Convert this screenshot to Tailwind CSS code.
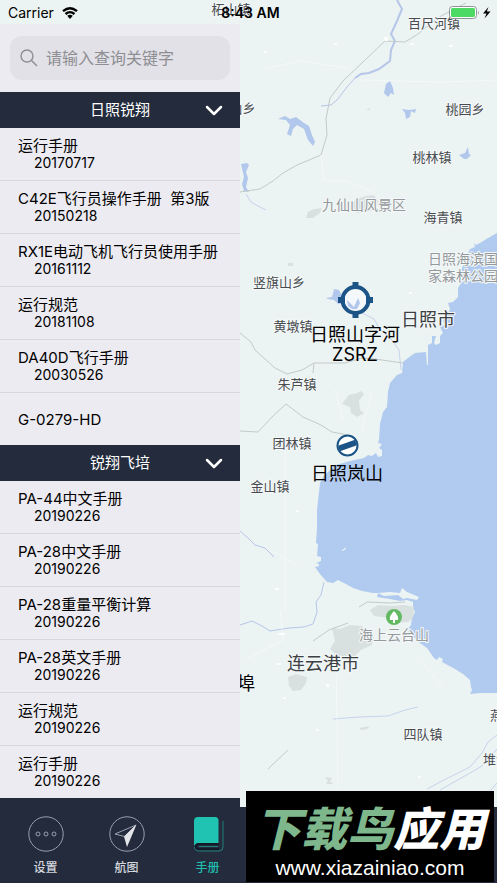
<!DOCTYPE html>
<html lang="zh-CN">
<head>
    <meta charset="UTF-8">
    <meta name="viewport" content="width=device-width, initial-scale=1.0">
    <title>飞行手册</title>
    <script src="https://cdn.jsdelivr.net/npm/@tailwindcss/browser@4"></script>
</head>
<body class="bg-[#ecf3f3] font-['Inter','Noto_Sans_CJK_SC',sans-serif] text-black">
    <div class="relative flex min-h-screen flex-col overflow-hidden">

        <!-- Map -->
        <svg class="absolute inset-0 h-full w-full" viewBox="0 0 497 883" preserveAspectRatio="xMinYMin slice" aria-label="地图">
            <!-- sea -->
            <path fill="#b1cbf0" d="M497 233L488 238L480 243L476 245L474 243L475 247L470 249L466 259L462 268L461 283L458 288L458 297L453 302L448 303L450 309L447 317L443 320L445 325L440 327L443 333L440 336L440 343L436 345L434 343L436 336L432 336L432 343L428 345L428 365L427 365L426 352L415 353L408 358L403 362L402 373L397 375L390 383L388 392L387 407L383 412L380 424L379 440L378 443L382 444L379 448L382 450V456L378 457L376 453L372 456L368 455L364 458L350 461L336 465L330 470L323 477L320 483L317 510L317 528L316 543L318 544L317 556L321 557V561L316 563L319 564L319 566L315 567L320 574L327 582L333 583L338 580L344 583L353 588L362 591L373 593L378 593L377 597L390 599L400 601L407 600L413 602L413 608L415 612L412 618L411 625L407 630L413 636L420 643L427 648L434 658L437 660L439 657L443 659L442 662L455 669L463 674L470 680L471 687L472 690L470 694L480 693L497 693Z"/>
            <g fill="#ecf3f3">
                <path d="M378 593L390 592L400 593L402 588L407 592L412 594L419 597L417 600L407 598L403 599L398 595L384 596Z"/>
                <path d="M341 551L346 547L345 550Z"/>
            </g>
            <!-- hills and urban patches -->
            <g fill="#d9e1e0">
                <path d="M306 218L308 212L314 209L322 208L320 213L313 218Z"/>
                <path d="M350 208L356 199L366 196L374 195L378 201L376 208L368 212L357 213Z"/>
                <path d="M342 404L349 395L357 393L361 391L364 394L359 401L360 410L364 413L357 417L351 413L350 407Z"/>
                <path d="M370 610L378 605L392 606L404 605L414 607L413 618L408 622L397 623L389 618L374 616Z"/>
                <path d="M332 628L340 629L350 625L362 626L366 634L374 636L372 645L361 650L353 658L338 656L330 649L335 641Z"/>
                <path d="M288 677L296 674L307 677L306 683L301 690L293 691L289 686Z"/>
                <path d="M359 728L370 726L367 729L361 730Z"/>
                <path d="M325 777L332 778L330 781L333 784L326 784L328 781Z"/>
                <path d="M288 263h5v3h-5zM366 110l4-2v2z"/>
            </g>
            <!-- lakes -->
            <g fill="#b1c8ec">
                <path d="M278 119L285 116L290 119L296 117L304 123L309 126L312 135L315 142L313 146L308 140L304 129L297 125L293 129L291 136L287 134L290 125L286 120Z"/>
                <path d="M384 93L386 84L390 81L393 88L394 95L391 93L388 97Z"/>
                <path d="M402 109L409 110L416 109L415 113L411 111L410 117L406 119L405 113Z"/>
                <path d="M459 155L465 153L468 147L469 154L471 155L467 159L464 159Z"/>
                <path d="M326 298L332 297L334 289L339 290L342 296L340 300L345 303L338 304L334 300L328 299Z"/>
                <path d="M241 164L247 163L249 165L246 172L248 178L246 187L249 192L244 191L242 184L244 177Z"/>
            </g>
            <!-- rivers -->
            <g fill="none" stroke="#b5c6e8">
                <path stroke-width="2" d="M397 0L402 9L397 21L391 34L395 41L391 50L390 61L379 69L369 73L361 74L355 78"/>
                <path d="M355 78L347 87L337 100L331 105L321 106"/>
                <path d="M240 531L248 538L255 545L265 548L274 557M240 625L252 621L262 626L270 631L289 628L304 627L313 624L317 612L316 602L321 595L324 582"/>
                <path d="M333 719L359 717L388 716L405 710L418 707M427 789L442 781L470 767L482 753L488 742L497 735M440 790L470 773L482 766L497 749M490 791L497 783" stroke-opacity=".7"/>
                <path d="M362 313L374 319L379 328L391 339L399 350L401 370M246 194L251 202L258 206L266 210" stroke-opacity=".7"/>
            </g>
            <!-- railways and roads -->
            <g fill="none" stroke="#c3caca">
                <path d="M240 192L260 189L273 181L283 173L297 165L321 155L327 135L326 119L330 98L343 81L385 41L405 42L418 34L430 24L441 16L466 3"/>
                <path d="M240 333L251 342L255 350L275 368L287 374L302 370L314 363L345 363L362 358L375 359L403 363M314 363L313 373"/>
                <path d="M240 431L258 432L273 416L286 404L303 417L321 425L332 432L348 435"/>
                <path d="M313 641L329 630L348 623M359 607L367 602L390 603L405 602M268 769L288 750"/>
            </g>
            <g fill="none" stroke="#f8fbfb" stroke-opacity=".6">
                <path d="M266 68L300 61L350 68M321 155L324 181L347 181L375 193M360 80L440 82L497 80M285 430L285 610M336 660L338 790M280 610L283 640L245 660M372 390L362 430M335 390L343 420M420 660L445 690M262 545L300 567"/>
            </g>
            <g fill="#ffffff" fill-opacity=".8">
                <path d="M384 37h4v4h-4zM334 43h3v2h-3zM264 51h3v2h-3zM410 43h4v2h-4zM449 45h4v2h-4zM296 510h3v2h-3zM275 588h4v2h-4zM278 633h7v2h-7zM277 663h4v2h-4zM326 684h3v3h-3zM283 697h3v2h-3zM316 729h3v2h-3zM418 776h3v2h-3zM409 292h3v2h-3z"/>
            </g>

            <!-- place names -->
            <g class="fill-[#484c50] text-[13px] [paint-order:stroke]" stroke="#f4f8f8" stroke-width="2" text-anchor="middle">
                <text x="231" y="14">柘山镇</text>
                <text x="434" y="28">百尺河镇</text>
                <text x="236" y="113">昆山乡</text>
                <text x="465" y="114">桃园乡</text>
                <text x="432" y="162">桃林镇</text>
                <text x="443" y="222">海青镇</text>
                <text x="279" y="287">竖旗山乡</text>
                <text x="293" y="331">黄墩镇</text>
                <text x="297" y="389">朱芦镇</text>
                <text x="292" y="448">团林镇</text>
                <text x="270" y="491">金山镇</text>
                <text x="423" y="739">四队镇</text>
                <text x="490" y="720" text-anchor="start">燕</text>
                <text x="483" y="764" text-anchor="start">堆沟</text>
            </g>
            <g class="fill-[#94999c] text-[14px] [paint-order:stroke]" stroke="#f4f8f8" stroke-width="2" text-anchor="middle">
                <text x="364" y="210">九仙山风景区</text>
                <text x="394" y="640">海上云台山</text>
                <text x="428" y="264" text-anchor="start">日照海滨国</text>
                <text x="428" y="281" text-anchor="start">家森林公园</text>
            </g>
            <g class="fill-[#3c4044] text-[18px] [paint-order:stroke]" stroke="#f4f8f8" stroke-width="2" text-anchor="middle">
                <text x="428" y="326">日照市</text>
                <text x="323" y="670">连云港市</text>
            </g>

            <!-- park pin -->
            <circle cx="394" cy="617" r="8" fill="#63b962"/>
            <path fill="#fff" d="M394 611Q399 616 398 620H395V623H393V620H390Q389 616 394 611Z"/>

            <!-- airfields -->
            <g fill="none" stroke="#1c5487">
                <circle cx="355.500" cy="300" r="13" stroke-width="4" fill="#f4f8fb"/>
                <path fill="#b1c8ec" stroke="none" d="M347 300L351 304L354 307L358 298L360 303L357 309L352 309L348 306Z"/>
                <path stroke-width="6" d="M355.500 282V289M355.500 311V318M338 300H345M366 300H373"/>
                <circle cx="347.500" cy="445.500" r="10" stroke-width="2" fill="#fff"/>
                <path stroke-width="6" d="M339 448.500L356 442.500"/>
            </g>
            <g class="text-[18px]" text-anchor="middle">
                <text x="355" y="341">日照山字河</text>
                <text x="355" y="361">ZSRZ</text>
                <text x="347" y="480">日照岚山</text>
                <text x="246" y="690">埠</text>
            </g>
        </svg>

        <!-- Status bar -->
        <header class="relative z-10 flex h-6 items-center justify-between pt-px pr-1 pl-2 text-sm">
            <div class="flex flex-1 items-center gap-2">
                <span>Carrier</span>
                <svg class="h-3 w-4" viewBox="0 0 16 12" fill="none" stroke="#000" stroke-width="2.300" aria-label="Wi-Fi">
                    <path d="M1 4.200Q8 -1.800 15 4.200M3.500 7Q8 3.200 12.500 7"/>
                    <path fill="#000" stroke="none" d="M5.200 8.800Q8 6.600 10.800 8.800L8 12Z"/>
                </svg>
            </div>
            <time class="font-semibold">8:43 AM</time>
            <div class="flex flex-1 justify-end">
                <svg class="h-4 w-11" viewBox="0 0 44 16" aria-label="电池">
                    <rect x=".5" y="1.500" width="27" height="12" rx="3" fill="#fff" stroke="#8d9492"/>
                    <rect x="2" y="3" width="24" height="9" rx="1.500" fill="#4cd964"/>
                    <path fill="#8d9492" d="M29 5.500Q30.500 7.500 29 9.500Z"/>
                    <path d="M39.500 2L34 8.500H37.500L35.500 13.500L41.500 6.500H37.800Z"/>
                </svg>
            </div>
        </header>

        <div class="relative flex flex-1">
            <!-- Manual list -->
            <aside class="z-10 flex w-60 flex-col bg-[#ecebf1]">
                <form class="px-2.5 pt-3 pb-3">
                    <label class="flex h-11 items-center gap-2 rounded-xl bg-[#e2e1e7] px-2.5">
                        <svg class="h-[18px] w-[18px] shrink-0" viewBox="0 0 18 18" fill="none" stroke="#8e8e93" stroke-width="1.400" aria-hidden="true">
                            <circle cx="7" cy="7" r="6"/>
                            <path d="M11.500 11.500L17 17"/>
                        </svg>
                        <input type="search" aria-label="搜索" placeholder="请输入查询关键字" class="w-full min-w-0 bg-transparent text-base outline-none placeholder:text-[#8e8e93]">
                    </label>
                </form>

                <button type="button" class="grid h-9 grid-cols-[1fr_auto_1fr] items-center bg-[#232b3c] px-4 text-[15px] text-white">
                    <span class="col-start-2">日照锐翔</span>
                    <svg class="h-4 w-5 justify-self-end" viewBox="0 0 20 16" fill="none" stroke="#fff" stroke-width="2.500" stroke-linecap="round" stroke-linejoin="round" aria-hidden="true"><path d="M3 5L10 12L17 5"/></svg>
                </button>
                <ul class="divide-y divide-[#d7d7de] text-[15px] leading-[17px]">
                    <li class="flex h-[53px] flex-col justify-center pl-[18px]"><a href="#">运行手册</a><span class="pl-4 text-sm leading-[17px]">20170717</span></li>
                    <li class="flex h-[53px] flex-col justify-center pl-[18px]"><a href="#" class="whitespace-pre">C42E飞行员操作手册  第3版</a><span class="pl-4 text-sm leading-[17px]">20150218</span></li>
                    <li class="flex h-[53px] flex-col justify-center pl-[18px]"><a href="#">RX1E电动飞机飞行员使用手册</a><span class="pl-4 text-sm leading-[17px]">20161112</span></li>
                    <li class="flex h-[53px] flex-col justify-center pl-[18px]"><a href="#">运行规范</a><span class="pl-4 text-sm leading-[17px]">20181108</span></li>
                    <li class="flex h-[53px] flex-col justify-center pl-[18px]"><a href="#">DA40D飞行手册</a><span class="pl-4 text-sm leading-[17px]">20030526</span></li>
                    <li class="flex h-[52px] flex-col justify-center pl-[18px]"><a href="#">G-0279-HD</a></li>
                </ul>

                <button type="button" class="grid h-9 grid-cols-[1fr_auto_1fr] items-center bg-[#232b3c] px-4 text-[15px] text-white">
                    <span class="col-start-2">锐翔飞培</span>
                    <svg class="h-4 w-5 justify-self-end" viewBox="0 0 20 16" fill="none" stroke="#fff" stroke-width="2.500" stroke-linecap="round" stroke-linejoin="round" aria-hidden="true"><path d="M3 5L10 12L17 5"/></svg>
                </button>
                <ul class="divide-y divide-[#d7d7de] text-[15px] leading-[17px]">
                    <li class="flex h-[53px] flex-col justify-center pl-[18px]"><a href="#">PA-44中文手册</a><span class="pl-4 text-sm leading-[17px]">20190226</span></li>
                    <li class="flex h-[53px] flex-col justify-center pl-[18px]"><a href="#">PA-28中文手册</a><span class="pl-4 text-sm leading-[17px]">20190226</span></li>
                    <li class="flex h-[53px] flex-col justify-center pl-[18px]"><a href="#">PA-28重量平衡计算</a><span class="pl-4 text-sm leading-[17px]">20190226</span></li>
                    <li class="flex h-[53px] flex-col justify-center pl-[18px]"><a href="#">PA-28英文手册</a><span class="pl-4 text-sm leading-[17px]">20190226</span></li>
                    <li class="flex h-[53px] flex-col justify-center pl-[18px]"><a href="#">运行规范</a><span class="pl-4 text-sm leading-[17px]">20190226</span></li>
                    <li class="flex h-[52px] flex-col justify-center pl-[18px]"><a href="#">运行手册</a><span class="pl-4 text-sm leading-[17px]">20190226</span></li>
                </ul>

                <nav class="flex flex-1 bg-[#232b3c] pt-[18px] pl-[5px] text-xs font-medium text-[#d3d6dc]">
                    <a href="#" class="flex w-[81px] shrink-0 flex-col items-center gap-2">
                        <svg class="h-9 w-9" viewBox="0 0 36 36" fill="none" stroke="#9aa0ac" aria-hidden="true">
                            <circle cx="18" cy="18" r="17.200"/>
                            <circle cx="10" cy="18" r="2"/><circle cx="18" cy="18" r="2"/><circle cx="26" cy="18" r="2"/>
                        </svg>
                        设置
                    </a>
                    <a href="#" class="flex w-[81px] shrink-0 flex-col items-center gap-2">
                        <svg class="h-9 w-9" viewBox="0 0 36 36" fill="none" stroke="#9aa0ac" aria-hidden="true">
                            <circle cx="18" cy="18" r="17.200"/>
                            <path d="M27 9L6 18L15.500 20.500Z"/>
                            <path fill="#e3e5e9" stroke="none" d="M27.500 8.500L15 20.500L18 31Z"/>
                        </svg>
                        航图
                    </a>
                    <a href="#" class="flex w-[81px] shrink-0 flex-col items-center gap-2 text-[#20bfae]">
                        <svg class="h-9 w-9" viewBox="0 0 36 36" fill="none" aria-hidden="true">
                            <path fill="#20c3b2" d="M4 29V5Q4 1 8 1H25Q28.500 1 28.500 4.500V27H9Q5.500 27 4 30Z"/>
                            <path stroke="#20a398" stroke-opacity=".7" d="M33 5V31Q33 35 29 35H9Q4.500 35 4.500 31"/>
                            <path stroke="#131a28" stroke-width="2" d="M29 28H9Q6 28 6 30.500Q6 33 9 33H29"/>
                            <path stroke="#20a398" stroke-opacity=".7" d="M9 30.500H28"/>
                        </svg>
                        手册
                    </a>
                </nav>
            </aside>

            <!-- Bottom bar under the map -->
            <div class="flex flex-1 flex-col justify-end">
                <div class="h-[76px] bg-[#232b3c]"></div>
            </div>
        </div>

        <div class="absolute right-[3px] bottom-px z-20 flex h-[91px] w-[248px] flex-col items-center justify-end bg-black pb-0.5 text-white">
            <p class="text-[46px] leading-[54px] font-black whitespace-nowrap italic"><span class="text-[#7fb78c]">下载鸟</span>应用</p>
            <p class="font-['Liberation_Sans',Arial,sans-serif] text-[21px] leading-6">www.xiazainiao.com</p>
        </div>
    </div>
</body>
</html>
